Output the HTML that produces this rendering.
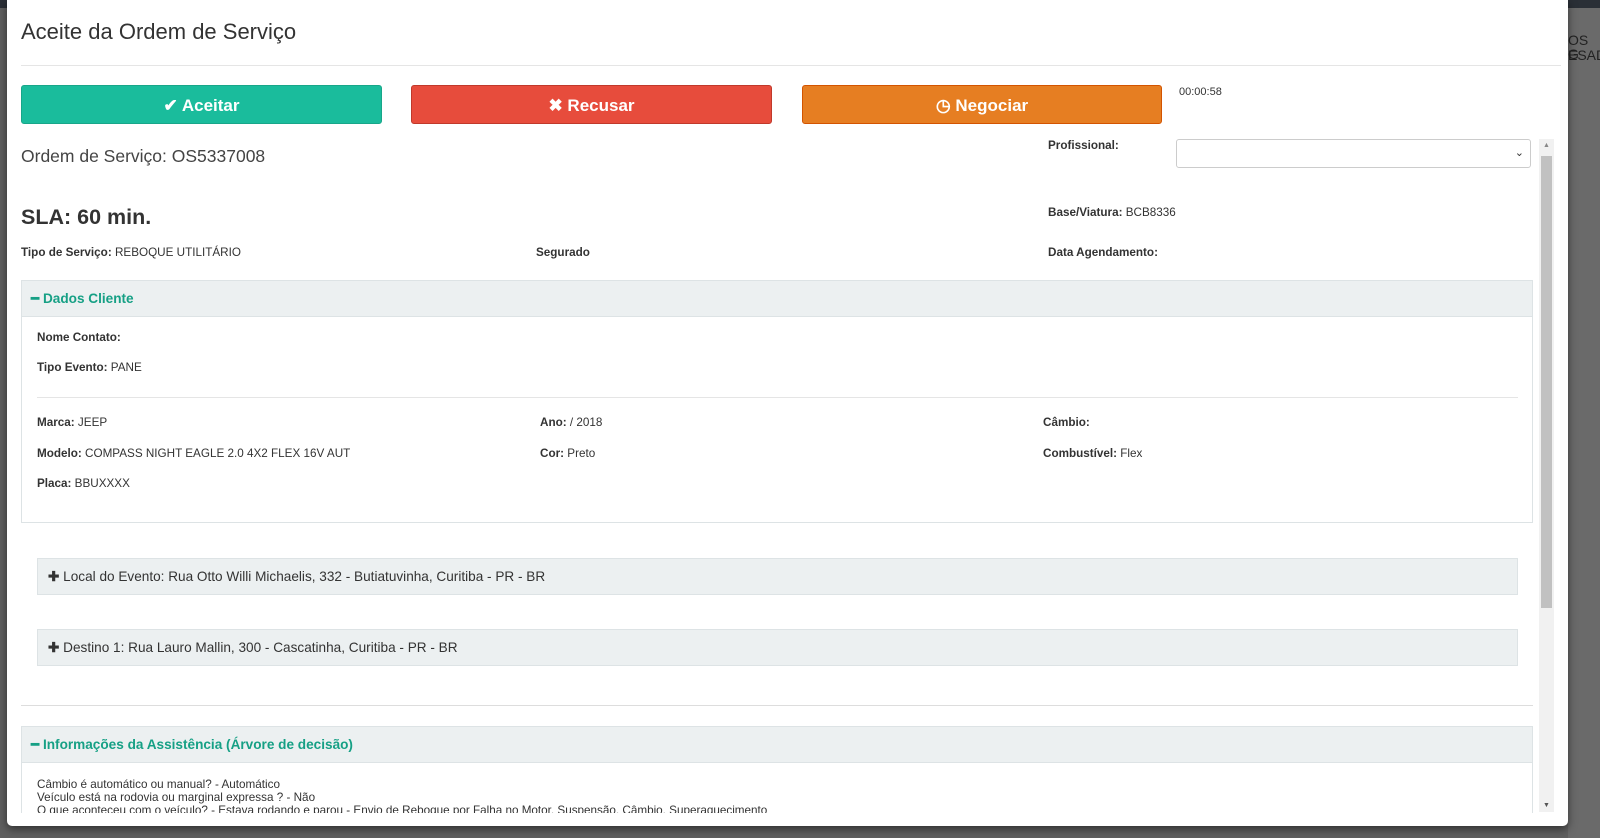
<!DOCTYPE html>
<html><head><meta charset="utf-8"><style>
*{box-sizing:border-box;margin:0;padding:0}
body{width:1600px;height:838px;overflow:hidden;background:#5f5f5f;font-family:"Liberation Sans",Arial,sans-serif;color:#333;position:relative}
.bgtop{position:absolute;left:0;top:0;width:1600px;height:8px;background:#2a2f36}
.side{position:absolute;left:1568px;top:8px;width:32px;height:830px;background:#6a6a6a}
.side span{position:absolute;left:0;color:#222;font-size:14px;line-height:14px}
.modal{position:absolute;left:7px;top:0;width:1561px;height:826px;background:#fff;border-radius:0 0 5px 5px;box-shadow:0 3px 9px rgba(0,0,0,.5)}
.abs{position:absolute}
h1{position:absolute;left:14px;top:19px;font-size:22px;font-weight:normal;color:#333}
.hr{position:absolute;height:1px;background:#e5e5e5}
.btn{position:absolute;top:85px;height:39px;border-radius:3px;color:#fff;font-weight:bold;font-size:17px;text-align:center;line-height:39px}
.ph{position:absolute;background:#ecf0f1;border:1px solid #dde3e5}
.ph .t{position:absolute;left:9px;top:10px;font-size:13.6px;font-weight:bold;color:#16a085}
.sm{font-size:11.7px;position:absolute;white-space:nowrap}
</style></head><body>
<div class="bgtop"></div>
<div class="side"><span style="top:25px">OS G</span><span style="top:40px">ESAD</span></div>
<div class="modal">
<h1>Aceite da Ordem de Serviço</h1>
<div class="hr" style="left:14px;top:65px;width:1540px"></div>
<div class="btn" style="left:14px;width:361px;background:#1abc9c;border:1px solid #18a689">✔ Aceitar</div>
<div class="btn" style="left:404px;width:361px;background:#e74c3c;border:1px solid #c0392b">✖ Recusar</div>
<div class="btn" style="left:795px;width:360px;background:#e67e22;border:1px solid #d35400">◷ Negociar</div>
<div class="sm" style="left:1172px;top:86px;font-size:11px">00:00:58</div>

<div class="abs" style="left:14px;top:146px;font-size:17.5px;color:#444">Ordem de Serviço: OS5337008</div>
<div class="sm" style="left:1041px;top:139px"><b>Profissional:</b></div>
<div class="abs" style="left:1169px;top:139px;width:355px;height:29px;border:1px solid #ccc;border-radius:3px"><span style="position:absolute;right:6px;top:6px;font-size:11px">⌄</span></div>
<div class="abs" style="left:1532px;top:139px;width:15px;height:673px;background:#f1f1f1"><div style="position:absolute;left:2px;top:17px;width:11px;height:452px;background:#c1c1c1"></div><div style="position:absolute;left:4px;top:3px;font-size:7px;color:#888">▲</div><div style="position:absolute;left:4px;bottom:3px;font-size:7px;color:#555">▼</div></div>
<div class="abs" style="left:14px;top:205px;font-size:21.5px;font-weight:bold;color:#333">SLA: 60 min.</div>
<div class="sm" style="left:1041px;top:206px"><b>Base/Viatura:</b> BCB8336</div>
<div class="sm" style="left:14px;top:246px"><b>Tipo de Serviço:</b> REBOQUE UTILITÁRIO</div>
<div class="sm" style="left:529px;top:246px"><b>Segurado</b></div>
<div class="sm" style="left:1041px;top:246px"><b>Data Agendamento:</b></div>

<div class="abs" style="left:14px;top:280px;width:1512px;height:243px;border:1px solid #dde3e5"></div>
<div class="ph" style="left:14px;top:280px;width:1512px;height:37px"><div class="t">━ Dados Cliente</div></div>
<div class="sm" style="left:30px;top:331px"><b>Nome Contato:</b></div>
<div class="sm" style="left:30px;top:361px"><b>Tipo Evento:</b> PANE</div>
<div class="hr" style="left:30px;top:397px;width:1481px"></div>
<div class="sm" style="left:30px;top:416px"><b>Marca:</b> JEEP</div>
<div class="sm" style="left:533px;top:416px"><b>Ano:</b> / 2018</div>
<div class="sm" style="left:1036px;top:416px"><b>Câmbio:</b></div>
<div class="sm" style="left:30px;top:447px"><b>Modelo:</b> COMPASS NIGHT EAGLE 2.0 4X2 FLEX 16V AUT</div>
<div class="sm" style="left:533px;top:447px"><b>Cor:</b> Preto</div>
<div class="sm" style="left:1036px;top:447px"><b>Combustível:</b> Flex</div>
<div class="sm" style="left:30px;top:477px"><b>Placa:</b> BBUXXXX</div>

<div class="ph" style="left:30px;top:558px;width:1481px;height:37px"><div style="position:absolute;left:10px;top:10px;font-size:13.6px;color:#333"><b>✚</b> Local do Evento: Rua Otto Willi Michaelis, 332 - Butiatuvinha, Curitiba - PR - BR</div></div>
<div class="ph" style="left:30px;top:629px;width:1481px;height:37px"><div style="position:absolute;left:10px;top:10px;font-size:13.6px;color:#333"><b>✚</b> Destino 1: Rua Lauro Mallin, 300 - Cascatinha, Curitiba - PR - BR</div></div>
<div class="hr" style="left:14px;top:705px;width:1512px;background:#ddd"></div>

<div class="abs" style="left:14px;top:726px;width:1512px;height:87px;border:1px solid #dde3e5;border-bottom:none;overflow:hidden">
<div class="ph" style="left:-1px;top:-1px;width:1512px;height:37px"><div class="t">━ Informações da Assistência (Árvore de decisão)</div></div>
<div class="sm" style="left:15px;top:51px;line-height:13px">Câmbio é automático ou manual? - Automático<br>Veículo está na rodovia ou marginal expressa ? - Não<br>O que aconteceu com o veículo? - Estava rodando e parou - Envio de Reboque por Falha no Motor, Suspensão, Câmbio, Superaquecimento</div>
</div>
</div>
</body></html>
